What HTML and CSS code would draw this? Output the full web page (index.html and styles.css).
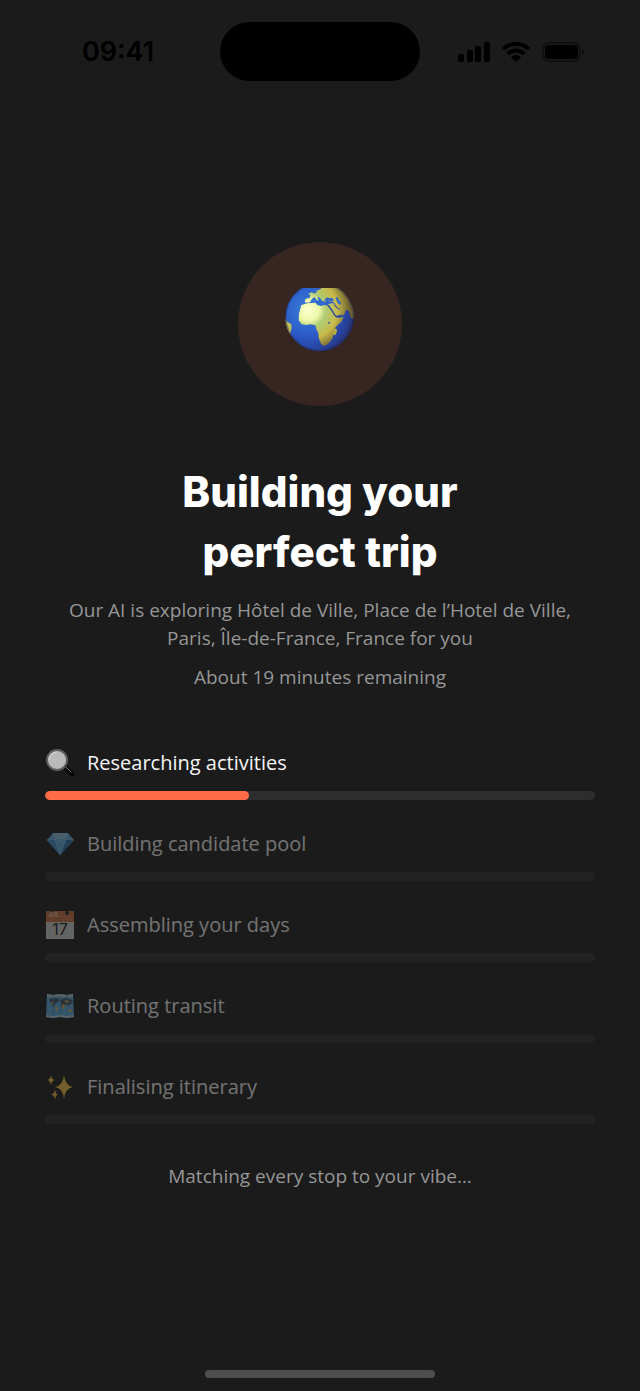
FILE: index.html
```html
<!DOCTYPE html>
<html lang="en">
<head>
    <meta charset="UTF-8">
    <meta name="viewport" content="width=device-width, initial-scale=1.0">
    <title>Building your perfect trip</title>
    <link rel="stylesheet" href="styles.css">
</head>
<body>
<header class="status-bar">
    <time class="clock">09:41</time>
    <div class="island"></div>
    <div class="status-icons">
        <svg width="32" height="20" viewBox="0 0 32 20" aria-hidden="true">
            <rect x="0" y="12" width="6" height="8" rx="2"/>
            <rect x="9" y="8" width="6" height="12" rx="2"/>
            <rect x="17" y="4" width="6" height="16" rx="2"/>
            <rect x="26" y="0" width="6" height="20" rx="2"/>
        </svg>
        <svg width="28" height="20" viewBox="0 0 28 20" aria-hidden="true">
            <path d="M14 0C8.600 0 3.800 2 .4 5.200Q0 5.700 .4 6.200L2.100 7.900Q2.600 8.300 3.100 7.900C6 5.200 9.800 3.900 14 3.900s8 1.300 10.900 4q.5 .4 1 0l1.700-1.700q.4-.5 0-1C24.200 2 19.400 0 14 0z"/>
            <path d="M14 6.500c-3.600 0-6.800 1.300-9.200 3.500q-.5.500 0 1l1.800 1.800q.5.400 1 0C9.300 11.300 11.500 10.400 14 10.400s4.700.9 6.400 2.400q.5.400 1 0l1.800-1.800q.5-.5 0-1C20.800 7.800 17.600 6.500 14 6.500z"/>
            <path d="M14 13c-1.800 0-3.400.6-4.600 1.600q-.5.500 0 1l4.100 4q.5.500 1 0l4.100-4q.5-.5 0-1C17.400 13.600 15.800 13 14 13z"/>
        </svg>
        <svg width="44" height="20" viewBox="0 0 44 20" aria-hidden="true">
            <rect class="battery-shell" x="1" y="1" width="37" height="18" rx="6"/>
            <rect x="3" y="3" width="33" height="14" rx="4"/>
            <path class="battery-tip" d="M40 7v6c3-1 3-5 0-6z"/>
        </svg>
    </div>
</header>

<main class="content">
    <div class="globe">
        <svg width="72" height="72" viewBox="42 39 216 216" aria-hidden="true">
            <defs>
                <radialGradient id="sea" cx="0.32" cy="0.4" r="0.72">
                    <stop offset="0" stop-color="#3a80d6"/>
                    <stop offset="0.5" stop-color="#2c5ccb"/>
                    <stop offset="0.85" stop-color="#263f96"/>
                    <stop offset="1" stop-color="#26295c"/>
                </radialGradient>
                <radialGradient id="land" gradientUnits="userSpaceOnUse" cx="115" cy="105" r="125">
                    <stop offset="0" stop-color="#fdffd0"/>
                    <stop offset="0.26" stop-color="#ecf8a8"/>
                    <stop offset="0.42" stop-color="#b0cc74"/>
                    <stop offset="0.7" stop-color="#c8b94a"/>
                    <stop offset="1" stop-color="#6b6030"/>
                </radialGradient>
                <clipPath id="ball">
                    <circle cx="149" cy="126" r="103"/>
                </clipPath>
            </defs>
            <g clip-path="url(#ball)">
                <circle cx="149" cy="126" r="103" fill="url(#sea)"/>
                <!-- Europe and Asia -->
                <path fill="url(#land)" d="M104 80l3-9 12-2 2-8-6-4 8-5 9 3 7-8 12-4 4-6h53c24 16 40 39 45 70l-2 24-8-2-6-20-9-5-4 12-6 6-14-21-11-17-8-6-5 4-6-8-7 6-10-2-7-9-7-4 3 12-6-2-7-9-8 7-5 9-12 1z"/>
                <!-- Black and Caspian seas -->
                <path fill="#3567c4" d="M164 73l8-6 5 3 9-2 6 8-9 4-9-4-9 3zM196 69l7-3 3 9 7 7-2 9-8-7zM127 42l10-3 5 8-7 9-5-4z"/>
                <!-- Africa -->
                <path fill="url(#land)" d="M94 90l18-5 24-2 6 7 10 3 12-3 14 3 9 9 9 16 8 11 17-4-5 13-19 18-3 13-4 9-2 12-9 12-9 8-10 2-7-6-7-18-1-14-6-11-3-12-14-3-13 2-14-2-9-12 1-20z"/>
                <!-- Arabia -->
                <path fill="url(#land)" d="M174 87l15-3 12 14 12 5 10 7-9 9-15 4-9-11-9-16z"/>
                <path fill="none" stroke="#2c4b96" stroke-width="4" d="M174 91l11 14 9 15 6 6 14-5"/>
                <path fill="none" stroke="#2c4b96" stroke-width="3" d="M194 91l8 9 8 3"/>
                <ellipse cx="195" cy="171" rx="5" ry="10" fill="#b9ad45" transform="rotate(18 195 171)"/>
                <!-- South America -->
                <path fill="url(#land)" d="M44 130l8 10 12 8 1 12-5 16 5 20-18-22z"/>
                <circle cx="177" cy="143" r="3" fill="#36609c"/>
                <circle cx="149" cy="126" r="101" fill="none" stroke="#16244d" stroke-opacity="0.4" stroke-width="4"/>
            </g>
        </svg>
    </div>

    <h1 class="title">Building your<br>perfect trip</h1>
    <p class="subtitle">Our AI is exploring Hôtel de Ville, Place de l’Hotel de Ville, Paris, Île-de-France, France for you</p>
    <p class="remaining">About 19 minutes remaining</p>

    <ul class="steps">
        <li class="step active">
            <div class="step-head">
                <svg width="30" height="28" viewBox="0 0 30 28" aria-hidden="true">
                    <path d="M18 17l4 4" stroke="#888" stroke-width="2"/>
                    <path d="M21 19l6 6" stroke="#080808" stroke-width="5" stroke-linecap="round"/>
                    <path d="M21 18l5 5" stroke="#777" stroke-width="1" stroke-linecap="round"/>
                    <circle cx="12" cy="11" r="10" fill="#b9bab9" stroke="#5e5e5e" stroke-width="2"/>
                    <path d="M4 11a8 8 0 0 1 8-8" fill="none" stroke="#d8d8d8" stroke-width="1"/>
                </svg>
                <label for="research">Researching activities</label>
            </div>
            <progress id="research" class="bar" value="37" max="100"></progress>
        </li>
        <li class="step">
            <div class="step-head">
                <svg width="30" height="28" viewBox="0 0 30 28" aria-hidden="true">
                    <path fill="#5eaddf" d="M8 3h15l6 7-14 15L2 10z"/>
                    <path fill="#8fc6e6" d="M8 3h15l-3 6H10z"/>
                    <path fill="#3e8bcc" d="M2 10h7l6 15z"/>
                    <path fill="#2d76b4" d="M21 10h8L15 25z"/>
                    <path fill="none" stroke="#8fc6e6" stroke-opacity="0.6" stroke-width="1" d="M2 10l8-1 5 3 6-3 8 1M8 3l2 6 5 16 6-16 2-6"/>
                </svg>
                <label for="pool">Building candidate pool</label>
            </div>
            <progress id="pool" class="bar" value="0" max="100"></progress>
        </li>
        <li class="step">
            <div class="step-head">
                <svg width="30" height="28" viewBox="0 0 30 28" aria-hidden="true">
                    <path fill="#cfd4d4" d="M1 0h28v28H1z"/>
                    <path fill="#c9703f" d="M1 0h28v11H1z"/>
                    <circle cx="7" cy="1" r="1" fill="#222"/>
                    <circle cx="22" cy="2" r="2" fill="#222"/>
                    <text class="cal-month" x="3" y="6">JUL</text>
                    <path stroke="#f3c6ab" stroke-dasharray="1 3" d="M16 6h12M18 9h10"/>
                    <text class="cal-day" x="15" y="24" text-anchor="middle">17</text>
                </svg>
                <label for="days">Assembling your days</label>
            </div>
            <progress id="days" class="bar" value="0" max="100"></progress>
        </li>
        <li class="step">
            <div class="step-head">
                <svg width="30" height="28" viewBox="0 0 30 28" aria-hidden="true">
                    <path fill="#58aee0" d="M2 2l6 1 7-1 7 1 6-1 1 23-7 1-7-1-7 1-7-1z"/>
                    <path fill="#b8cad2" d="M2 2l6 1 7-1 7 1 6-1v3H2zM1 23l7 1 7-1 7 1 7-1v2l-7 1-7-1-7 1-7-1z"/>
                    <path fill="#46566a" d="M4 7l9-1 1 3-4 3-1 3-4-5zM15 8l5-2 8 2-2 4-3 2-2-2-3 5-2-4z"/>
                    <path fill="#d9b544" d="M6 10l3 1-2 2zM10 14l3 2-2 4zM17 12l3 1-2 5zM20 8l4 1-1 2-3-1zM24 17l3 1-1 2-3-1z"/>
                    <path stroke="#397fb1" stroke-opacity="0.5" d="M8 3v21M15 2v21M22 3v21"/>
                </svg>
                <label for="transit">Routing transit</label>
            </div>
            <progress id="transit" class="bar" value="0" max="100"></progress>
        </li>
        <li class="step">
            <div class="step-head">
                <svg width="30" height="28" viewBox="0 0 30 28" aria-hidden="true">
                    <path fill="#f4c342" d="M19 1.500q.8 11 9 12.500-8.200 1.500-9 12.500-.8-11-9-12.500 8.200-1.500 9-12.500zM6 2q.5 4.500 4 5-3.500.5-4 5.500-.5-5-4-5.500 3.500-.5 4-5zM10 16q.5 5 3 5.500-2.500.5-3 5.500-.5-5-4-5.500 3.500-.5 4-5.500z"/>
                </svg>
                <label for="final">Finalising itinerary</label>
            </div>
            <progress id="final" class="bar" value="0" max="100"></progress>
        </li>
    </ul>

    <p class="tip">Matching every stop to your vibe…</p>
</main>

<div class="home-indicator"></div>
</body>
</html>
```
FILE: styles.css
```css
:root {
    --bg: #1b1b1b;
    --text-primary: #f5f5f5;
    --text-secondary: #969696;
    --accent: #ff6b47;
    --track: #2d2d2d;
}

* {
    box-sizing: border-box;
}

body {
    display: flex;
    flex-direction: column;
    min-height: 100vh;
    margin: 0;
    background-color: var(--bg);
    color: var(--text-primary);
    font-family: "Open Sans", "Noto Sans", sans-serif;
    font-size: 20px;
    line-height: 28px;
}

.status-bar {
    display: grid;
    grid-template-columns: 1fr 200px 1fr;
    align-items: center;
    padding-top: 22px;
}

.clock {
    justify-self: center;
    padding-left: 16px;
    color: #000;
    font-family: Inter, sans-serif;
    font-size: 27px;
    font-weight: 600;
}

.island {
    height: 59px;
    border-radius: 30px;
    background-color: #000;
}

.status-icons {
    display: flex;
    justify-content: center;
    gap: 12px;
    padding-right: 16px;
}

.battery-shell {
    fill: none;
    stroke: #111;
    stroke-width: 2;
}

.battery-tip {
    fill: #111;
}

.content {
    display: flex;
    flex: 1;
    flex-direction: column;
    align-items: center;
    padding: 161px 45px 40px;
    text-align: center;
}

.globe {
    display: flex;
    align-items: center;
    justify-content: center;
    width: 164px;
    height: 164px;
    border-radius: 50%;
    background-color: #362521;
}

.title {
    margin: 56px 0 14px;
    color: #fff;
    font-family: Inter, sans-serif;
    font-size: 42px;
    font-weight: 800;
    line-height: 60px;
}

.subtitle,
.remaining,
.tip {
    margin: 0;
    color: var(--text-secondary);
    font-size: 19px;
}

.remaining {
    margin-top: 11px;
}

.steps {
    display: flex;
    flex-direction: column;
    gap: 30px;
    width: 100%;
    margin: 58px 0 38px;
    padding: 0;
    list-style: none;
}

.step {
    opacity: 0.4;
}

.step.active {
    opacity: 1;
}

.step-head {
    display: flex;
    align-items: center;
    gap: 12px;
    margin-bottom: 14px;
}

.bar {
    display: block;
    width: 100%;
    height: 9px;
    border: none;
    border-radius: 5px;
    overflow: hidden;
    background-color: var(--track);
    appearance: none;
}

.bar::-webkit-progress-bar {
    background-color: var(--track);
}

.bar::-webkit-progress-value {
    border-radius: 5px;
    background-color: var(--accent);
}

.cal-month {
    fill: #f3c6ab;
    font-family: Inter, sans-serif;
    font-size: 6px;
    font-weight: 700;
}

.cal-day {
    fill: #222;
    font-family: Inter, sans-serif;
    font-size: 16px;
}

.home-indicator {
    align-self: center;
    width: 36%;
    height: 8px;
    margin-bottom: 13px;
    border-radius: 4px;
    background-color: #4e4e4e;
}
```
